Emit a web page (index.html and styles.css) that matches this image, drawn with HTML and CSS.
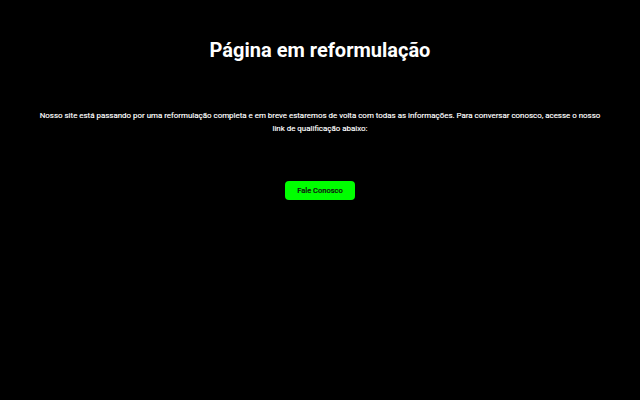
FILE: index.html
```html
<!DOCTYPE html>
<html lang="pt-BR">
<head>
<meta charset="utf-8">
<title>Página em reformulação</title>
<link rel="stylesheet" href="styles.css">
</head>
<body>
<main class="page">
  <h1 class="title">Página em reformulação</h1>
  <p class="lead">Nosso site está passando por uma reformulação completa e em breve estaremos de volta com todas as informações. Para conversar conosco, acesse o nosso link de qualificação abaixo:</p>
  <a class="cta" href="#">Fale Conosco</a>
</main>
</body>
</html>
```
FILE: styles.css
```css
html, body {
  margin: 0;
  padding: 0;
  background: #000;
  height: 100%;
}
body {
  font-family: Roboto, "Noto Sans", sans-serif;
  color: #fff;
}
.page {
  display: flex;
  flex-direction: column;
  align-items: center;
  padding: 38px 36px 0;
  text-align: center;
}
.title {
  margin: 0;
  font-size: 20px;
  font-weight: 700;
  line-height: 24px;
}
.lead {
  margin: 47px 0 0;
  font-size: 7.93px;
  line-height: 13px;
  color: #fff;
  -webkit-text-stroke: 0.15px #fff;
}
.cta {
  margin-top: 46px;
  display: inline-block;
  background: #00ff00;
  color: #111;
  text-decoration: none;
  font-size: 7.5px;
  font-weight: 500;
  line-height: 19px;
  padding: 0 12px;
  border-radius: 4px;
  -webkit-text-stroke: 0.15px #111;
}
```
